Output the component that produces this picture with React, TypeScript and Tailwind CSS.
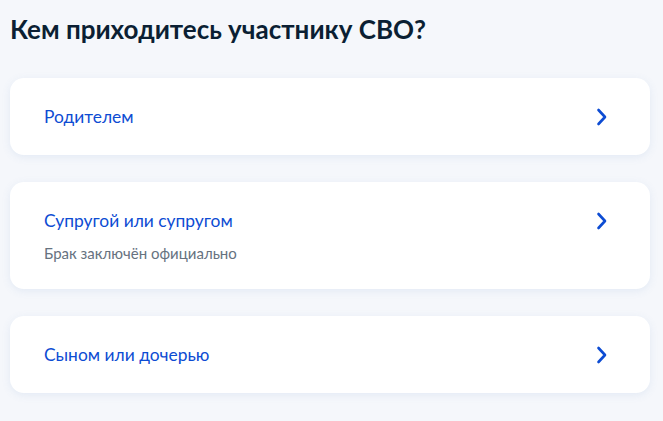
import React from "react";

const Chevron = () => (
  <svg width="12" height="18" viewBox="0 0 12 18" fill="none" className="shrink-0">
    <path d="M2.5 2L9 9L2.5 16" stroke="#0d4cd3" strokeWidth="2.6" strokeLinecap="round" strokeLinejoin="round" />
  </svg>
);

const items = [
  { title: "Родителем" },
  { title: "Супругой или супругом", sub: "Брак заключён официально" },
  { title: "Сыном или дочерью" },
];

export default function App() {
  return (
    <div
      className="w-[663px] h-[421px] bg-[#f5f7fb] px-[10px] pt-[14px] overflow-hidden"
      style={{ fontFamily: "Lato, 'Noto Sans', sans-serif" }}
    >
      <h1 className="text-[26px] leading-[30px] font-bold text-[#0b1f33] m-0">
        Кем приходитесь участнику СВО?
      </h1>
      <div className="flex flex-col gap-[27px] mt-[34px] w-[640px]">
        {items.map((it) => (
          <div
            key={it.title}
            className="bg-white rounded-[14px] shadow-[0_2px_8px_rgba(102,140,200,0.12)] pl-[34px] pr-[42px] py-[26px] flex items-start justify-between"
          >
            <div className="flex flex-col">
              <div className="text-[17.4px] leading-[25px] text-[#0d4cd3]">{it.title}</div>
              {it.sub && (
                <div className="text-[15px] leading-[20px] text-[#66727f] mt-[10px]">{it.sub}</div>
              )}
            </div>
            <div className="pt-[4px]">
              <Chevron />
            </div>
          </div>
        ))}
      </div>
    </div>
  );
}
